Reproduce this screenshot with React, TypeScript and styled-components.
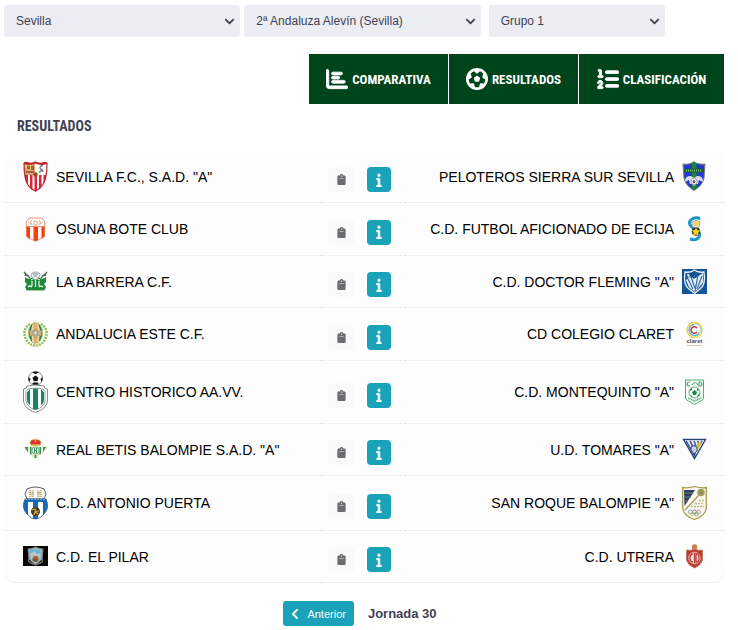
import React from "react";
import styled, { createGlobalStyle } from "styled-components";
import { FaChevronDown, FaChevronLeft } from "react-icons/fa";
import { FaChartBar, FaClipboard, FaFutbol, FaInfo, FaListOl } from "react-icons/fa6";

const GlobalStyle = createGlobalStyle`
  *, *::before, *::after { box-sizing: border-box; }
  body {
    margin: 0;
    background: #fff;
    color: #000;
    font-family: "Liberation Sans", Arial, sans-serif;
  }
`;

const narrow = `"Roboto Condensed", "Open Sans Condensed", Roboto, sans-serif`;

const Page = styled.main`
  padding: 5px 13px 4px 4px;
`;

const Filters = styled.form`
  display: grid;
  grid-template-columns: 4fr 4fr 3fr 1fr;
`;

const Field = styled.div<{ $last?: boolean }>`
  position: relative;
  padding: ${(p) => (p.$last ? "0 0 0 4px" : "0 4px 0 0")};

  svg {
    position: absolute;
    top: 11px;
    right: ${(p) => (p.$last ? "5px" : "9px")};
    color: #3f4254;
    pointer-events: none;
  }
`;

const Select = styled.select`
  appearance: none;
  display: block;
  width: 100%;
  height: 32px;
  padding: 0 24px 0 12px;
  border: 0;
  border-radius: 3px;
  background: #ebedf3;
  color: #3f4254;
  font: 12px "Liberation Sans", Arial, sans-serif;
`;

const Tabs = styled.nav`
  display: flex;
  justify-content: flex-end;
  margin-top: 17px;
`;

const Tab = styled.button<{ $width: number }>`
  display: flex;
  align-items: center;
  justify-content: center;
  gap: 4px;
  min-width: ${(p) => p.$width}px;
  height: 50px;
  padding: 0 8px;
  border: 0;
  border-right: 1px solid #fff;
  background: #00441b;
  color: #fff;
  font: bold 13px ${narrow};

  .bold-icon path { stroke: currentColor; stroke-width: 20; }
`;

const Title = styled.h1`
  margin: 10px 0 13px 13px;
  color: #3f4254;
  font: bold 14px/24px ${narrow};
`;

const Matches = styled.table`
  width: 100%;
  table-layout: fixed;
  border-collapse: separate;
  border-spacing: 0;
  border-radius: 12px;
  background: #fdfdfd;
`;

const Cell = styled.td<{ $width?: string }>`
  width: ${(p) => p.$width ?? "auto"};
  padding: 10px 0;
  border-bottom: 1px dotted #e2e2e6;

  tr:last-child &:first-child { border-bottom-left-radius: 12px; }
  tr:last-child &:last-child { border-bottom-right-radius: 12px; }
`;

const Team = styled.div<{ $away?: boolean }>`
  display: flex;
  flex-direction: ${(p) => (p.$away ? "row-reverse" : "row")};
  align-items: center;
  gap: 8px;
  padding: ${(p) => (p.$away ? "0 18px 0 0" : "0 0 0 19px")};
  font-size: 14px;
  line-height: 20px;
  white-space: nowrap;

  svg { flex: none; display: block; }
`;

const Actions = styled.div`
  display: flex;
  gap: 12px;
  padding: 6px 0 0 7px;
`;

const IconButton = styled.button<{ $primary?: boolean }>`
  display: flex;
  align-items: center;
  justify-content: center;
  width: ${(p) => (p.$primary ? 24 : 27)}px;
  height: 25px;
  padding: 0;
  border: 0;
  border-radius: 4px;
  background: ${(p) => (p.$primary ? "#1aa2b8" : "#fafafa")};
  color: ${(p) => (p.$primary ? "#fff" : "#6c6d70")};

  path {
    stroke: currentColor;
    stroke-width: ${(p) => (p.$primary ? 24 : 0)};
  }
`;

const Pager = styled.footer`
  display: flex;
  align-items: center;
  justify-content: center;
  gap: 14px;
  padding-right: 9px;
  margin-top: 18px;
  color: #3f4254;
  font-size: 13px;
`;

const Previous = styled.button`
  display: flex;
  align-items: center;
  gap: 6px;
  height: 25px;
  padding: 0 8px 0 6px;
  border: 0;
  border-radius: 3px;
  background: #1aa2b8;
  color: #fff;
  font: 11px "Liberation Sans", Arial, sans-serif;
`;

type CrestProps = { height: number; children: React.ReactNode };

const Crest = ({ height, children }: CrestProps) => (
  <svg width="25" height={height} viewBox={`0 0 25 ${height}`} aria-hidden="true">
    {children}
  </svg>
);

const Sevilla = () => (
  <Crest height={31}>
    <clipPath id="sev"><path d="M.5 2 4 .8Q8 2.5 12.5.5 17 2.5 21 .8L24.5 2Q24.5 18 20 24 17 29 12.5 30.5 8 29 5 24 .5 18 .5 2Z" /></clipPath>
    <g clipPath="url(#sev)">
      <path fill="#fff" d="M0 0h25v31H0z" />
      <path fill="#d9a577" d="M1 2h11v12H1z" />
      <path fill="#a9603a" d="M4 5h3v3H4zM8 5h3v4H8zM3 10h8v2H3z" />
      <path fill="#e7cf73" d="M2 4h2v3H2zM7 4h1v5H7z" />
      <path d="M16 11q4-1 1-4 0-3 3-2M19 8l1 3" fill="none" stroke="#777" strokeWidth="1.3" />
      <path fill="#dc2438" d="M2 14h3v14H2zM7 14h2.5v16H7zM11.5 14H14v17h-2.500zM16 14h2.500v16H16zM20.500 14H23v12h-2.500z" />
      <circle cx="12.500" cy="13.500" r="2.300" fill="#9a4b20" />
    </g>
    <path d="M1 2.300 4 1.500Q8 3.200 12.500 1.200 17 3.200 21 1.500L24 2.300Q24 18 19.500 24 16.500 28.500 12.500 30 8 28.500 5 24 1 18 1 2.300Z" fill="none" stroke="#b82b2b" strokeWidth="1.200" />
    <path d="M1 2Q8 4 12.500 1.500 17 4 24 2" fill="none" stroke="#c3222c" strokeWidth="2" />
  </Crest>
);

const Peloteros = () => (
  <Crest height={31}>
    <path d="M1 3Q8 4 12 .8 16 4 23 3L22 17Q21 24 12 29.500 3 24 2 17Z" fill="#2936d0" stroke="#778267" />
    <path d="M10 2.500 12 1l2.500 1.500V27L12 29l-2-2Z" fill="#188b36" />
    <path fill="#165b43" d="M2 7.500h20v4H2z" />
    <path d="M4 9.500h16" stroke="#7fc46b" strokeWidth="2" strokeDasharray="1 1" />
    <path d="M3 21q0-7 6-6l3 2 3-2q6-1 6 6l-4-2-1 4h-2l-2 2-2-2H8l-1-4Z" fill="#d8ddeb" />
    <circle cx="12" cy="20.500" r="3" fill="#fff" stroke="#777" strokeWidth=".7" />
    <path d="m12 19 1.500 1-.5 2h-2l-.5-2Z" fill="#555" />
  </Crest>
);

const Osuna = () => (
  <Crest height={32}>
    <path d="M6 5h13l3 4-1 5H4L3 9Z" fill="#fff" stroke="#ef9270" />
    <path d="M9 7q-3 2 0 5M16 7q3 2 0 5M11 8h3v4h-3zM5 9l3 2M20 9l-3 2" fill="none" stroke="#e8a78e" />
    <clipPath id="osu"><path d="M3 13.500h19V23q-2 3-9.500 5.500Q5 26 3 23Z" /></clipPath>
    <g clipPath="url(#osu)"><path fill="#fff" d="M2 13h21v16H2z" /><path fill="#ff3b08" d="M3 13h4v16H3zM10.500 13h4.500v16h-4.500zM18.500 13H22v16h-3.500z" /></g>
    <path d="M3.500 13.500h18V23q-2 2.500-9 5-7-2.500-9-5Z" fill="none" stroke="#ef805e" strokeWidth=".8" />
  </Crest>
);

const Ecija = () => (
  <Crest height={32}>
    <path d="M18 6Q15 4 11 5.500 6 8 8 12q2 3 6 5 5 3 3 7-3 4-9 2" fill="none" stroke="#1893c5" strokeWidth="3" />
    <path d="M10 9q4-3 8 0l-1 5-3 2-4-3Z" fill="#fff" stroke="#777" strokeWidth=".7" />
    <path d="m11 10 2-3 2 3 2-3v5l-3 2-3-2Z" fill="#efd45b" />
    <circle cx="14" cy="18.500" r="4.300" fill="#333" />
    <path d="m14 14.500 1.300 2.500 3 .5-2 2 .3 3-2.600-1-2.600 1 .3-3-2-2 3-.5Z" fill="#f4d318" />
    <path d="M9 25q5 2 8-1" fill="none" stroke="#38a9cf" />
  </Crest>
);

const Barrera = () => (
  <Crest height={31}>
    <path d="m1 6 6 6M24 6l-6 6M2 9l4 1M23 9l-4 1" stroke="#48674e" strokeWidth="1.300" />
    <path d="M2 11q3 3 6 1 4-3 9 0 3 2 6-1v5l-2 2 2 3-2 4H4l-2-4 2-3-2-2Z" fill="#20883b" />
    <path d="M8 10q0-4 4.500-4T17 10l-4.500 4Z" fill="#edf1ee" stroke="#849188" strokeWidth=".8" />
    <path d="M8 14q4-3 9 0M9 15v5M12.500 14v7M16 15v5M5 21q2-2 4 0M16 21q2-2 4 0" fill="none" stroke="#e8f6e9" strokeWidth="1.200" />
    <path d="M10 8h5M11 10h3" stroke="#789" />
    <path d="M4 24.500h17" stroke="#a7c6ae" />
  </Crest>
);

const Fleming = () => (
  <Crest height={31}>
    <path fill="#145497" d="M0 3h25v25H0z" />
    <path d="M3 6q6 1 9.500-2 3.500 3 9.500 2 2 13-4 17l-5.500 4.500L7 23Q1 19 3 6Z" fill="#145497" stroke="#e9f1f7" strokeWidth="1.300" />
    <path d="m4 14 5-4 3 3 9-6v9l-5 7-3.500 3L7 21Z" fill="#e6eef5" />
    <path d="m6 13 5 10m-2-12 4 11m3-13-3 16m7-15-5 13" stroke="#2e69a4" strokeWidth="1.200" />
    <path d="M5 8h6l2 2-3 1-2-1-2 2Z" fill="#c3d8e9" />
    <path d="m7 8 4-1 2 3-4 2Z" fill="#174e85" />
  </Crest>
);

const Andalucia = () => (
  <Crest height={32}>
    <path d="M7 6Q-1 11 2.500 20 5 27 12 27.500M18 6q8 5 4.500 14-2.500 7-10 7.500" fill="none" stroke="#8ebd56" strokeWidth="2.500" strokeDasharray="2 1" />
    <ellipse cx="12.500" cy="15" rx="7" ry="10.500" fill="#21764a" stroke="#abc66b" />
    <path d="M10 4.500h5L17 12l-1 12-3.500 2L9 24 8 12Z" fill="#eadb9e" />
    <path d="M10.500 5h4v20h-4z" fill="#dfae76" />
    <path d="m6 12 3 1 3.500-2 3.500 2 3-1-1 6-3-1-2.500 3-2.500-3-3 1Z" fill="#d5b778" stroke="#a48a63" strokeWidth=".6" />
    <circle cx="12.500" cy="15" r="3" fill="#a4a4a2" /><path d="M12.500 13v4M11 15h3" stroke="#efe2cf" />
    <path d="M7 27.500h11" stroke="#d5c986" />
  </Crest>
);

const Claret = () => (
  <Crest height={32}>
    <circle cx="12.500" cy="12" r="7.500" fill="#fff" stroke="#f2cf36" strokeWidth="1.500" />
    <path d="M12.500 6.500a5.500 5.500 0 1 0 5 8" fill="none" stroke="#55b9dc" strokeWidth="1.500" />
    <path d="M13 5.500a6.500 6.500 0 0 1 5 9" fill="none" stroke="#83cbe1" />
    <path d="M15 10a3.300 3.300 0 1 0 0 4" fill="none" stroke="#c8304b" strokeWidth="1.500" />
    <text x="12.500" y="25" textAnchor="middle" fontFamily="Liberation Sans" fontWeight="bold" fontSize="6" fill="#5a4a55">claret</text>
    <path d="M5 27.500h15" stroke="#d9c9b6" />
  </Crest>
);

const Centro = () => (
  <Crest height={42}>
    <circle cx="12.500" cy="7.500" r="7" fill="#fff" stroke="#888" />
    <path d="m12.500 4.500 3 2.200-1.200 3.500h-3.600L9.500 6.700ZM9 1.500 12.500.5 16 1.500 12.500 3ZM5.500 6l2 2-1 3-1-2ZM19.500 6l-2 2 1 3 1-2ZM9 13l1.500-1.500h4L16 13l-3.500 1.500Z" fill="#111" />
    <path d="M4 15q8.500-2 17 0 0 3 3.500 3v12q-1 8-12 11.500Q1.500 38 .5 30V18Q4 18 4 15Z" fill="#fff" stroke="#8a8a8a" />
    <path d="M5 18q7.500-2 15 0l2 2.500V30q-1 6-9.500 9Q4 36 3 30v-9.500Z" fill="#fff" stroke="#8da79d" />
    <path d="M4 21.500 7 18v16q-3-2-3-5ZM10 17.500h5V38l-2.500.8L10 38ZM18 18l3 3.500V29q0 3-3 5.500Z" fill="#14875f" />
  </Crest>
);

const Montequinto = () => (
  <Crest height={42}>
    <path d="M3.500 9h18v18q0 2-3 3l-6 3.500-6-3.500q-3-1-3-3Z" fill="#f7fcf8" stroke="#4bae70" />
    <path d="M8 11q-3 0-3 2t3 2M17 11h1q2 0 2 2t-2 2h-1ZM10 14q3-5 6 0" fill="none" stroke="#54ae75" strokeWidth="1.200" />
    <circle cx="12.500" cy="21.500" r="5.500" fill="#fff" stroke="#55ad77" />
    <path d="m12.500 19 2.500 2-1 3h-3l-1-3ZM8 18l2-1v2l-2 1ZM15 17l2 2-2 1ZM9 24l2 2-3-1ZM15 25l2-2 1 1-3 2Z" fill="#188b48" />
    <path d="m6 27 6.500 3 6.500-3" fill="none" stroke="#3f9a60" strokeWidth="1.500" strokeDasharray="1 .7" />
  </Crest>
);

const Betis = () => (
  <Crest height={31}>
    <path d="M0 12.500h25L21 18l-4 3-4.500 4L8 21l-4-3Z" fill="#eee8c4" />
    <path d="M2 13h3v5l-3-4ZM7 13h1.500v8L7 20ZM16.500 13H18v7l-1.500 1ZM20 13h3l-3 5ZM11.500 21h2v3h-2Z" fill="#3a9465" />
    <circle cx="12.500" cy="16.500" r="3.600" fill="#f8faed" stroke="#5ea781" />
    <path d="M11.500 14v5M13.500 14v5M11 16.500h3" stroke="#3a9465" />
    <path d="M8 11 7 8q2-3 5.500-2Q16 5 18 8l-1 3Z" fill="#da302b" stroke="#be8b35" strokeWidth=".8" />
    <path d="M12.500 4.500v4M8 11h9" stroke="#e0b33f" strokeWidth="1.300" />
  </Crest>
);

const Tomares = () => (
  <Crest height={31}>
    <path d="M1.500 5.500h22l-11 19Z" fill="#fff" stroke="#2e4475" strokeWidth="1.400" />
    <path d="m4 7 9 15M8 7l5 10M12 7l2 5M16 7v4M20 7l-3 5" stroke="#425ba0" strokeWidth="1.700" />
    <path d="m15 9 5-1-5 10Z" fill="#e2bd38" />
    <path d="M9 13q3-3 6 0v4l-3 3-3-4Z" fill="#cbd2dc" stroke="#334d8b" />
    <path d="m11 20 3-1-1.500 4Z" fill="#26468a" />
  </Crest>
);

const Puerta = () => (
  <Crest height={34}>
    <path d="M4 3q8.500-4 17 0l2 5-2 5H4L2 8Z" fill="#fff" stroke="#333" strokeWidth=".8" />
    <path d="M7 5h4v6H7zM14 5h4v6h-4z" fill="#e4d8ad" />
    <path d="M7 4v8M10 4v8M15 4v8M18 4v8M7 7h4M14 7h4" stroke="#a99a67" strokeDasharray="1 1" />
    <clipPath id="pue"><path d="M2 13h21q4 9-2 15-4 5-8.500 5T4 28Q-2 22 2 13Z" /></clipPath>
    <g clipPath="url(#pue)"><path fill="#fff" d="M0 13h25v21H0z" /><path fill="#176bb6" d="M0 13h25v3H0zM0 15h5v19H0zM10 15h5v19h-5zM20 15h5v19h-5z" /></g>
    <path d="M2 13h21q4 9-2 15-4 5-8.500 5T4 28Q-2 22 2 13Z" fill="none" stroke="#355879" strokeWidth=".8" />
    <path d="M2 13.500h21" stroke="#70a7d3" strokeDasharray="2 1" />
    <circle cx="12.500" cy="25.500" r="4.500" fill="#453d24" /><path d="m9 24 3-1 1 3 3-1M11 29l1-3 3 2" fill="none" stroke="#c9a340" strokeWidth="1.300" />
  </Crest>
);

const SanRoque = () => (
  <Crest height={34}>
    <path d="M.7 1.500q5 1 11.800-1 6.800 2 11.800 1V22q-1 8-11.800 11.500Q1.700 30 .7 22Z" fill="#fbfbf5" stroke="#a69b4d" strokeWidth="1.300" />
    <path d="M2 4h11L2.500 20Z" fill="#3b3764" />
    <path d="M2 7h9M2 11h7M2 15h4" stroke="#477568" strokeWidth="1.300" />
    <path d="M3 24 17 9" stroke="#aaa15e" strokeWidth="1.500" />
    <circle cx="19" cy="6.500" r="3.800" fill="#a9a164" /><path d="m16.500 6 5 1M19 3v7" stroke="#827b3f" strokeWidth=".7" />
    <path d="M17 14.500h5M13 17.500h9M9 20.500h13" stroke="#c0b887" strokeDasharray="2 1" strokeWidth="1.300" />
    <g fill="none" strokeWidth=".9"><circle cx="8.500" cy="26" r="2" stroke="#7091bb" /><circle cx="12.500" cy="26" r="2" stroke="#777" /><circle cx="16.500" cy="26" r="2" stroke="#d28686" /><circle cx="10.500" cy="28" r="2" stroke="#d7bf67" /><circle cx="14.500" cy="28" r="2" stroke="#78a983" /></g>
  </Crest>
);

const Pilar = () => (
  <Crest height={31}>
    <path d="M0 5h25v20H0z" fill="#050505" />
    <path d="M5 8q4 0 7.500-2Q16 8 20 8l-1 10-6.500 6L6 18Z" fill="#8ebdcd" stroke="#927f70" />
    <path d="m7 9 5-1 6 2-1 5H7Z" fill="#62b5d2" />
    <path d="m7 13 4-3 3 3 3-1v5H8Z" fill="#bdc5c4" />
    <path d="M6 18q-2 2 2 4l4.500 2 4.500-2q4-2 2-4" fill="none" stroke="#76716d" strokeWidth="1.500" />
    <circle cx="12.500" cy="18" r="3" fill="#87512c" /><path d="M10 17q3-1 5 1" stroke="#c17d3e" fill="none" />
  </Crest>
);

const Utrera = () => (
  <Crest height={31}>
    <circle cx="12.500" cy="6" r="2.700" fill="#c98252" />
    <path d="M4.500 9q4 1 8-1 4 2 8 1v10q-1 5-8 8-7-3-8-8Z" fill="#b9372e" stroke="#cf7a68" />
    <circle cx="12.500" cy="17" r="6" fill="#f2dfda" stroke="#d98b80" />
    <path d="M11 13q-3 0-3 4t3 4M14 13h1q2 0 2 4t-2 4h-1ZM12.500 12v10" fill="none" stroke="#b83a35" strokeWidth="1.300" />
  </Crest>
);

const matches = [
  { home: 'SEVILLA F.C., S.A.D. "A"', HomeCrest: Sevilla, away: "PELOTEROS SIERRA SUR SEVILLA", AwayCrest: Peloteros },
  { home: "OSUNA BOTE CLUB", HomeCrest: Osuna, away: "C.D. FUTBOL AFICIONADO DE ECIJA", AwayCrest: Ecija },
  { home: "LA BARRERA C.F.", HomeCrest: Barrera, away: 'C.D. DOCTOR FLEMING "A"', AwayCrest: Fleming },
  { home: "ANDALUCIA ESTE C.F.", HomeCrest: Andalucia, away: "CD COLEGIO CLARET", AwayCrest: Claret },
  { home: "CENTRO HISTORICO AA.VV.", HomeCrest: Centro, away: 'C.D. MONTEQUINTO "A"', AwayCrest: Montequinto },
  { home: 'REAL BETIS BALOMPIE S.A.D. "A"', HomeCrest: Betis, away: 'U.D. TOMARES "A"', AwayCrest: Tomares },
  { home: "C.D. ANTONIO PUERTA", HomeCrest: Puerta, away: 'SAN ROQUE BALOMPIE "A"', AwayCrest: SanRoque },
  { home: "C.D. EL PILAR", HomeCrest: Pilar, away: "C.D. UTRERA", AwayCrest: Utrera },
];

const filters = [
  { label: "Provincia", value: "Sevilla" },
  { label: "Competición", value: "2ª Andaluza Alevín (Sevilla)" },
  { label: "Grupo", value: "Grupo 1" },
];

export default function App() {
  return (
    <Page>
      <GlobalStyle />
      <Filters>
        {filters.map((f, i) => (
          <Field key={f.label} $last={i === filters.length - 1}>
            <Select aria-label={f.label} defaultValue={f.value}>
              <option>{f.value}</option>
            </Select>
            <FaChevronDown size={11} />
          </Field>
        ))}
      </Filters>

      <Tabs>
        <Tab type="button" $width={140}><FaChartBar className="bold-icon" size={22} />COMPARATIVA</Tab>
        <Tab type="button" $width={130}><FaFutbol size={22} />RESULTADOS</Tab>
        <Tab type="button" $width={146}><FaListOl className="bold-icon" size={22} />CLASIFICACIÓN</Tab>
      </Tabs>

      <Title>RESULTADOS</Title>

      <Matches>
        <tbody>
          {matches.map(({ home, HomeCrest, away, AwayCrest }) => (
            <tr key={home}>
              <Cell $width="44%">
                <Team><HomeCrest />{home}</Team>
              </Cell>
              <Cell $width="84px">
                <Actions>
                  <IconButton type="button" aria-label="Acta"><FaClipboard size={11} /></IconButton>
                  <IconButton type="button" aria-label="Información" $primary><FaInfo size={14} /></IconButton>
                </Actions>
              </Cell>
              <Cell>
                <Team $away><AwayCrest />{away}</Team>
              </Cell>
            </tr>
          ))}
        </tbody>
      </Matches>

      <Pager>
        <Previous type="button"><FaChevronLeft size={12} />Anterior</Previous>
        <strong>Jornada 30</strong>
      </Pager>
    </Page>
  );
}
